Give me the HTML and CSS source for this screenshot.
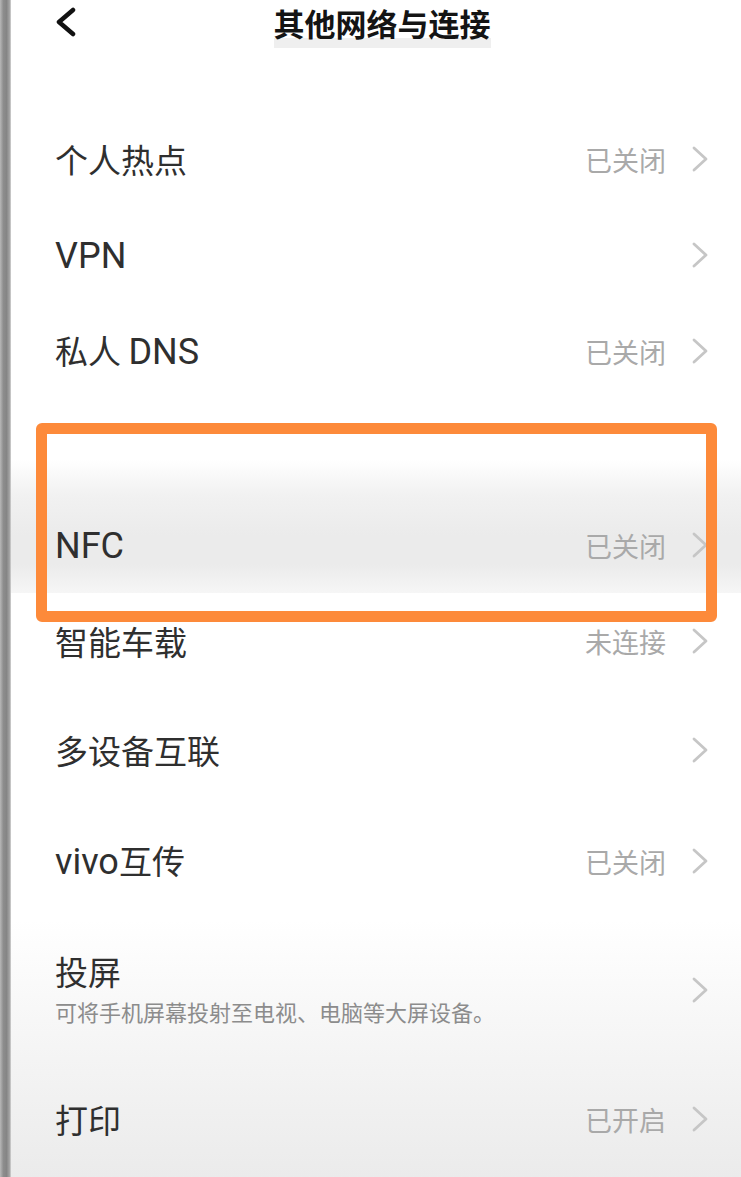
FILE: index.html
```html
<!DOCTYPE html>
<html lang="zh-CN">
<head>
<meta charset="utf-8">
<title>其他网络与连接</title>
<link rel="stylesheet" href="styles.css">
</head>
<body>
<div class="page">
  <div class="edge"></div>
  <div class="screen">
    <header class="header">
      <svg class="back" width="22" height="30" viewBox="0 0 22 30"><polyline points="19,3 5,15 19,27" fill="none" stroke="#111" stroke-width="4.5" stroke-linecap="round" stroke-linejoin="round"/></svg>
      <h1 class="title">其他网络与连接</h1>
    </header>

    <div class="row"><span class="label">个人热点</span><span class="status">已关闭</span><svg class="chev" width="16" height="26" viewBox="0 0 16 26"><polyline points="2,2 14,13 2,24" fill="none" stroke="#c6c6c6" stroke-width="2.8" stroke-linecap="round" stroke-linejoin="round"/></svg></div>
    <div class="row"><span class="label"><span class="latin">VPN</span></span><svg class="chev" width="16" height="26" viewBox="0 0 16 26"><polyline points="2,2 14,13 2,24" fill="none" stroke="#c6c6c6" stroke-width="2.8" stroke-linecap="round" stroke-linejoin="round"/></svg></div>
    <div class="row"><span class="label">私人 <span class="latin">DNS</span></span><span class="status">已关闭</span><svg class="chev" width="16" height="26" viewBox="0 0 16 26"><polyline points="2,2 14,13 2,24" fill="none" stroke="#c6c6c6" stroke-width="2.8" stroke-linecap="round" stroke-linejoin="round"/></svg></div>
    <div class="spacer"></div>
    <div class="row row-hl"><span class="label"><span class="latin">NFC</span></span><span class="status">已关闭</span><svg class="chev" width="16" height="26" viewBox="0 0 16 26"><polyline points="2,2 14,13 2,24" fill="none" stroke="#c6c6c6" stroke-width="2.8" stroke-linecap="round" stroke-linejoin="round"/></svg></div>
    <div class="row"><span class="label">智能车载</span><span class="status">未连接</span><svg class="chev" width="16" height="26" viewBox="0 0 16 26"><polyline points="2,2 14,13 2,24" fill="none" stroke="#c6c6c6" stroke-width="2.8" stroke-linecap="round" stroke-linejoin="round"/></svg></div>
    <div class="row row-tall"><span class="label">多设备互联</span><svg class="chev" width="16" height="26" viewBox="0 0 16 26"><polyline points="2,2 14,13 2,24" fill="none" stroke="#c6c6c6" stroke-width="2.8" stroke-linecap="round" stroke-linejoin="round"/></svg></div>
    <div class="row row-mid"><span class="label"><span class="latin">vivo</span>互传</span><span class="status">已关闭</span><svg class="chev" width="16" height="26" viewBox="0 0 16 26"><polyline points="2,2 14,13 2,24" fill="none" stroke="#c6c6c6" stroke-width="2.8" stroke-linecap="round" stroke-linejoin="round"/></svg></div>
    <div class="row row-two">
      <div class="stack">
        <span class="label">投屏</span>
        <span class="sub">可将手机屏幕投射至电视、电脑等大屏设备。</span>
      </div>
      <svg class="chev" width="16" height="26" viewBox="0 0 16 26"><polyline points="2,2 14,13 2,24" fill="none" stroke="#c6c6c6" stroke-width="2.8" stroke-linecap="round" stroke-linejoin="round"/></svg>
    </div>
    <div class="row row-last"><span class="label">打印</span><span class="status">已开启</span><svg class="chev" width="16" height="26" viewBox="0 0 16 26"><polyline points="2,2 14,13 2,24" fill="none" stroke="#c6c6c6" stroke-width="2.8" stroke-linecap="round" stroke-linejoin="round"/></svg></div>
  </div>
  <div class="highlight-box"></div>
</div>
</body>
</html>
```
FILE: styles.css
```css
* { box-sizing: border-box; }
html, body { margin: 0; padding: 0; }
body {
  width: 741px;
  height: 1177px;
  overflow: hidden;
  font-family: "Noto Sans CJK SC", sans-serif;
  background: #fff;
}
.page {
  position: relative;
  display: flex;
  width: 741px;
  height: 1177px;
}
.edge {
  width: 11px;
  flex: none;
  background: linear-gradient(to right, #b8b8b8 0, #8d8d8d 30%, #858585 60%, #a8a8a8 90%, #dcdcdc 100%);
}
.screen {
  flex: 1;
  display: flex;
  flex-direction: column;
  background: linear-gradient(to bottom, #ffffff 0, #ffffff 920px, #f7f7f7 1020px, #ebebeb 1177px);
}
.header {
  height: 111px;
  flex: none;
  position: relative;
  display: flex;
  justify-content: center;
  align-items: flex-start;
  padding-top: 2px;
}
.back {
  position: absolute;
  left: 43px;
  top: 7px;
}
.title {
  margin: 0 0 0 12px;
  font-family: "Noto Sans CJK SC", sans-serif;
  font-size: 31px;
  font-weight: 700;
  line-height: 42px;
  color: #141414;
  padding: 0 0 4px;
  background: linear-gradient(to bottom, transparent 78%, #efefef 78%);
}
.row {
  height: 96px;
  flex: none;
  display: flex;
  align-items: center;
  padding: 0 33px 0 44px;
}
.row-hl {
  background: linear-gradient(to bottom, #f1f1f1 0, #ebebeb 40%, #ebebeb 70%, #f6f6f6 100%);
}
.row-tall { height: 122px; }
.row-mid { height: 100px; }
.row-two { height: 158px; }
.row-last { height: 100px; }
.spacer {
  height: 98px;
  flex: none;
  background: linear-gradient(to bottom, #fff 0, #fff 62%, #f4f4f4 90%, #f1f1f1 100%);
}
.label {
  font-size: 33px;
  color: #2f2f2f;
  line-height: 40px;
  flex: 1;
}
.latin {
  font-family: Roboto, "Noto Sans CJK SC", sans-serif;
  font-size: 36px;
}
.stack {
  flex: 1;
  display: flex;
  flex-direction: column;
  gap: 6px;
  padding-bottom: 4px;
}
.stack .label { flex: none; }
.sub {
  font-size: 22px;
  line-height: 28px;
  color: #8c8c8c;
}
.status {
  font-size: 27px;
  color: #a9a9a9;
  margin-right: 26px;
}
.chev { flex: none; }
.highlight-box {
  position: absolute;
  left: 36px;
  top: 423px;
  width: 681px;
  height: 199px;
  border: 11px solid #fd8a3a;
  border-radius: 6px;
}
```
